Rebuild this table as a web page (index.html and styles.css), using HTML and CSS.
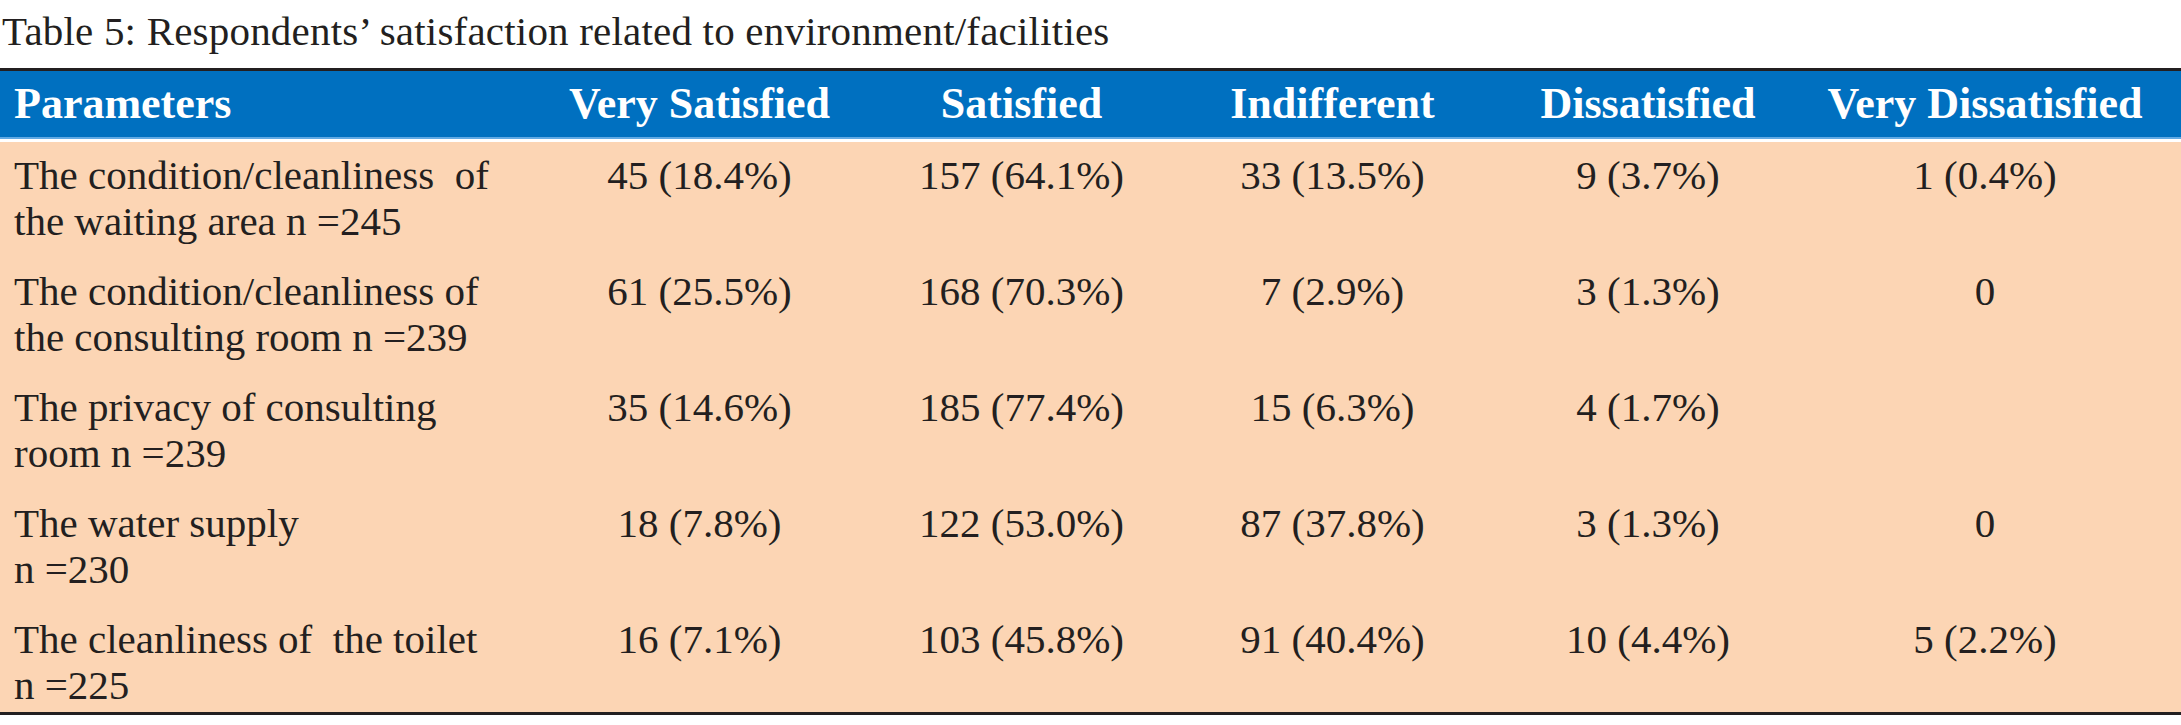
FILE: index.html
```html
<!DOCTYPE html>
<html lang="en">
<head>
<meta charset="utf-8">
<title>Table 5</title>
<link rel="stylesheet" href="styles.css">
</head>
<body>
<p class="caption">Table 5: Respondents’ satisfaction related to environment/facilities</p>
<table class="sat-table">
  <colgroup>
    <col class="c-param">
    <col class="c-vs">
    <col class="c-s">
    <col class="c-i">
    <col class="c-d">
    <col class="c-vd">
  </colgroup>
  <thead>
    <tr>
      <th class="param">Parameters</th>
      <th>Very Satisfied</th>
      <th>Satisfied</th>
      <th>Indifferent</th>
      <th>Dissatisfied</th>
      <th class="last">Very Dissatisfied</th>
    </tr>
  </thead>
  <tbody>
    <tr class="gap"><td colspan="6"></td></tr>
    <tr>
      <td class="param">The condition/cleanliness&nbsp; of<br>the waiting area n =245</td>
      <td>45 (18.4%)</td>
      <td>157 (64.1%)</td>
      <td>33 (13.5%)</td>
      <td>9 (3.7%)</td>
      <td class="last">1 (0.4%)</td>
    </tr>
    <tr>
      <td class="param">The condition/cleanliness of<br>the consulting room n =239</td>
      <td>61 (25.5%)</td>
      <td>168 (70.3%)</td>
      <td>7 (2.9%)</td>
      <td>3 (1.3%)</td>
      <td class="last">0</td>
    </tr>
    <tr>
      <td class="param">The privacy of consulting<br>room n =239</td>
      <td>35 (14.6%)</td>
      <td>185 (77.4%)</td>
      <td>15 (6.3%)</td>
      <td>4 (1.7%)</td>
      <td class="last"></td>
    </tr>
    <tr>
      <td class="param">The water supply<br>n =230</td>
      <td>18 (7.8%)</td>
      <td>122 (53.0%)</td>
      <td>87 (37.8%)</td>
      <td>3 (1.3%)</td>
      <td class="last">0</td>
    </tr>
    <tr class="final">
      <td class="param">The cleanliness of&nbsp; the toilet<br>n =225</td>
      <td>16 (7.1%)</td>
      <td>103 (45.8%)</td>
      <td>91 (40.4%)</td>
      <td>10 (4.4%)</td>
      <td class="last">5 (2.2%)</td>
    </tr>
  </tbody>
</table>
</body>
</html>
```

FILE: styles.css
```css
html, body {
  margin: 0;
  padding: 0;
  background: #ffffff;
}

body {
  font-family: "Liberation Serif", "Times New Roman", serif;
  color: #231f20;
}

.caption {
  margin: 0;
  padding: 6px 0 0 2px;
  height: 68px;
  box-sizing: border-box;
  font-size: 41px;
  line-height: 50px;
  letter-spacing: 0.2px;
  white-space: nowrap;
}

.sat-table {
  width: 2181px;
  table-layout: fixed;
  border-collapse: collapse;
  border-spacing: 0;
  border-top: 3px solid #231f20;
  border-bottom: 3px solid #231f20;
}

.c-param { width: 536px; }
.c-vs { width: 327px; }
.c-s { width: 317px; }
.c-i { width: 305px; }
.c-d { width: 326px; }
.c-vd { width: 370px; }

.sat-table th {
  background: #0070c0;
  color: #ffffff;
  font-weight: bold;
  font-size: 44px;
  line-height: 66px;
  height: 66px;
  padding: 0;
  text-align: center;
  white-space: nowrap;
  border-bottom: 2px solid #62aae4;
}

.sat-table th.param {
  text-align: left;
  padding-left: 14px;
}

.sat-table .gap td {
  height: 3px;
  padding: 0;
  background: #ffffff;
}

.sat-table td {
  background: #fcd5b4;
  font-size: 41px;
  line-height: 46px;
  padding: 10px 0 14px 0;
  text-align: center;
  vertical-align: top;
  white-space: nowrap;
}

.sat-table td.param {
  text-align: left;
  padding-left: 14px;
}

.sat-table th.last,
.sat-table td.last {
  padding-right: 22px;
}

.sat-table .final td {
  padding-bottom: 4px;
}
```
